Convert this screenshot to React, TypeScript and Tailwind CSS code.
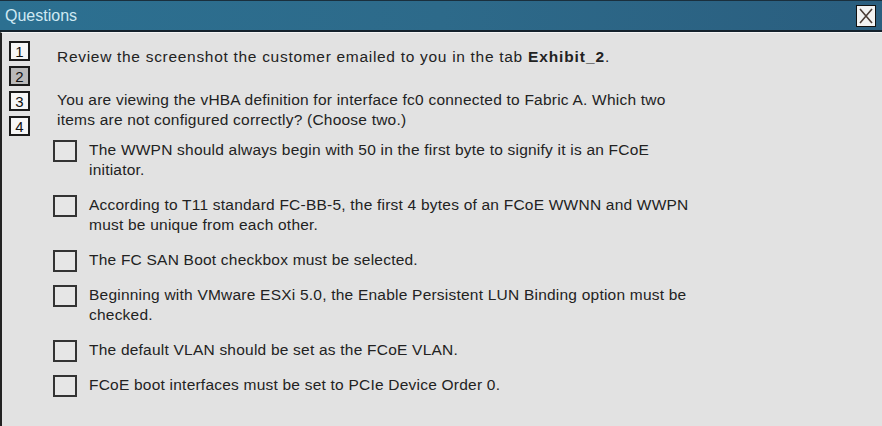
const options = [
  "The WWPN should always begin with 50 in the first byte to signify it is an FCoE initiator.",
  "According to T11 standard FC-BB-5, the first 4 bytes of an FCoE WWNN and WWPN must be unique from each other.",
  "The FC SAN Boot checkbox must be selected.",
  "Beginning with VMware ESXi 5.0, the Enable Persistent LUN Binding option must be checked.",
  "The default VLAN should be set as the FCoE VLAN.",
  "FCoE boot interfaces must be set to PCIe Device Order 0.",
];

const App = () => (
  <div
    className="w-[882px] h-[426px] overflow-hidden bg-[#e2e2e2] flex flex-col"
    style={{ fontFamily: '"Liberation Sans", Arial, sans-serif' }}
  >
    <div className="h-[32px] shrink-0 flex items-center justify-between border-t border-[#1a2f3d] border-b-2 border-b-[#14222c] bg-gradient-to-r from-[#2c7091] via-[#2d6a8a] to-[#2a5e7f] pl-[5px] pr-[6px]">
      <span className="text-[16px] text-[#cfe9f3] leading-none">Questions</span>
      <button className="w-[20px] h-[22px] bg-[#f2f2f2] border border-[#111] flex items-center justify-center">
        <svg width="16" height="18" viewBox="0 0 16 18">
          <path d="M2 2 L14 16 M14 2 L2 16" stroke="#4a3c36" strokeWidth="1.6" />
        </svg>
      </button>
    </div>
    <div className="flex-1 flex border-l-2 border-[#222] border-t border-t-[#f4f4f4]">
      <div className="w-[48px] shrink-0 pt-[8px] pl-[7px] flex flex-col gap-[5px]">
        {[1, 2, 3, 4].map((n) => (
          <div
            key={n}
            className={`w-[21px] h-[20px] border-2 border-[#1a1a1a] flex items-center justify-center text-[15px] text-[#111] leading-none ${
              n === 2 ? "bg-[#b9b9b9]" : "bg-[#f6f6f6]"
            }`}
          >
            {n}
          </div>
        ))}
      </div>
      <div className="flex-1 text-[15.5px] tracking-[0.22px] leading-[20px] text-[#222] pt-[14px] pl-[7px]">
        <p className="tracking-[0.7px]">
          Review the screenshot the customer emailed to you in the tab <b className="tracking-[0.9px]">Exhibit_2</b>.
        </p>
        <p className="mt-[23px] w-[645px]">
          You are viewing the vHBA definition for interface fc0 connected to Fabric A. Which two items are not configured correctly? (Choose two.)
        </p>
        <div className="mt-[10px] flex flex-col gap-[15px]">
          {options.map((o) => (
            <div key={o} className="flex items-start">
              <div className="w-[24px] h-[22px] -mb-[2px] ml-[-4px] shrink-0 border-2 border-[#333] bg-[#e6e6e6]" />
              <p className="ml-[12px] w-[615px]">{o}</p>
            </div>
          ))}
        </div>
      </div>
    </div>
  </div>
);

export default App;
